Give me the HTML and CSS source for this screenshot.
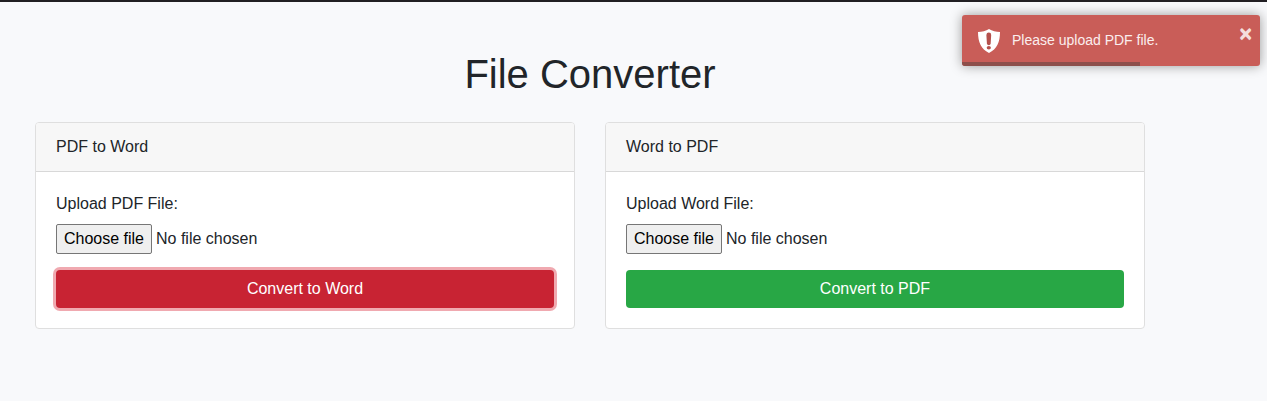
FILE: index.html
```html
<!DOCTYPE html>
<html lang="en">
<head>
<meta charset="utf-8">
<title>File Converter</title>
<link rel="stylesheet" href="styles.css">
</head>
<body>
<main class="container">
  <h1 class="title">File Converter</h1>
  <div class="row">
    <section class="card">
      <div class="card-header">PDF to Word</div>
      <form class="card-body">
        <label class="label">Upload PDF File:</label>
        <div class="file"><button type="button" class="choose">Choose file</button><span>No file chosen</span></div>
        <button type="button" class="btn btn-danger">Convert to Word</button>
      </form>
    </section>
    <section class="card">
      <div class="card-header">Word to PDF</div>
      <form class="card-body">
        <label class="label">Upload Word File:</label>
        <div class="file"><button type="button" class="choose">Choose file</button><span>No file chosen</span></div>
        <button type="button" class="btn btn-success">Convert to PDF</button>
      </form>
    </section>
  </div>
</main>
<div class="toast" role="alert">
  <svg class="toast-icon" width="24" height="24" viewBox="0 0 24 24"><path fill="#fff" d="M12 0C9 2 5 3 1 3c0 10 3 17 11 21 8-4 11-11 11-21-4 0-8-1-11-3z"/><path fill="#b5504c" d="M9.400 6q0-2.400 2.400-2.400T14.200 6l-.5 8.200q-.2 2-1.900 2T9.900 14.200z"/><ellipse cx="11.800" cy="18.700" rx="2.100" ry="1.700" fill="#b5504c"/></svg>
  <span class="toast-message">Please upload PDF file.</span>
  <span class="toast-close">×</span>
  <div class="toast-progress"></div>
</div>
</body>
</html>
```
FILE: styles.css
```css
* { box-sizing: border-box; }
body {
  margin: 0;
  min-height: 401px;
  border-top: 2px solid #211f23;
  background: #f8f9fb;
  color: #212529;
  font: 16px/24px "Liberation Sans", Arial, sans-serif;
}
.container { width: 1110px; margin-left: 35px; padding-top: 48px; }
.title { margin: 0 0 24px; font-size: 40px; font-weight: 400; line-height: 48px; text-align: center; }
.row { display: flex; gap: 30px; }
.card { flex: 1; background: #fff; border: 1px solid #dfdfdf; border-radius: 4px; }
.card-header { padding: 12px 20px; background: #f7f7f7; border-bottom: 1px solid #d8d8d8; border-radius: 3px 3px 0 0; }
.card-body { padding: 20px; }
.label { display: block; margin-bottom: 8px; }
.file { display: flex; align-items: center; gap: 4px; height: 30px; margin-bottom: 16px; }
.choose { height: 30px; width: 96px; padding: 0; font: inherit; color: #000; background: #efefef; border: 1px solid #767676; border-radius: 2px; }
.btn { display: block; width: 100%; height: 38px; border: 0; border-radius: 4px; padding: 0; font: inherit; color: #fff; }
.btn-danger { background: #c82333; box-shadow: 0 0 0 3px rgba(225, 83, 97, .5); }
.btn-success { background: #28a745; }
.toast {
  position: absolute;
  top: 15px;
  left: 962px;
  display: flex;
  align-items: center;
  width: 298px;
  height: 51px;
  padding-left: 15px;
  border-radius: 3px;
  background: #c95d58;
  color: #fbeeee;
  font-size: 14px;
  box-shadow: 0 0 12px #999;
  overflow: hidden;
}
.toast-icon { margin-right: 11px; }
.toast-message { padding-bottom: 2px; }
.toast-close { position: absolute; top: 7px; right: 8px; font-size: 22px; font-weight: 700; color: #fff; text-shadow: 0 1px 0 #fff; opacity: .8; }
.toast-progress { position: absolute; left: 0; bottom: 0; width: 178px; height: 4px; background: #8d4f4b; }
```
